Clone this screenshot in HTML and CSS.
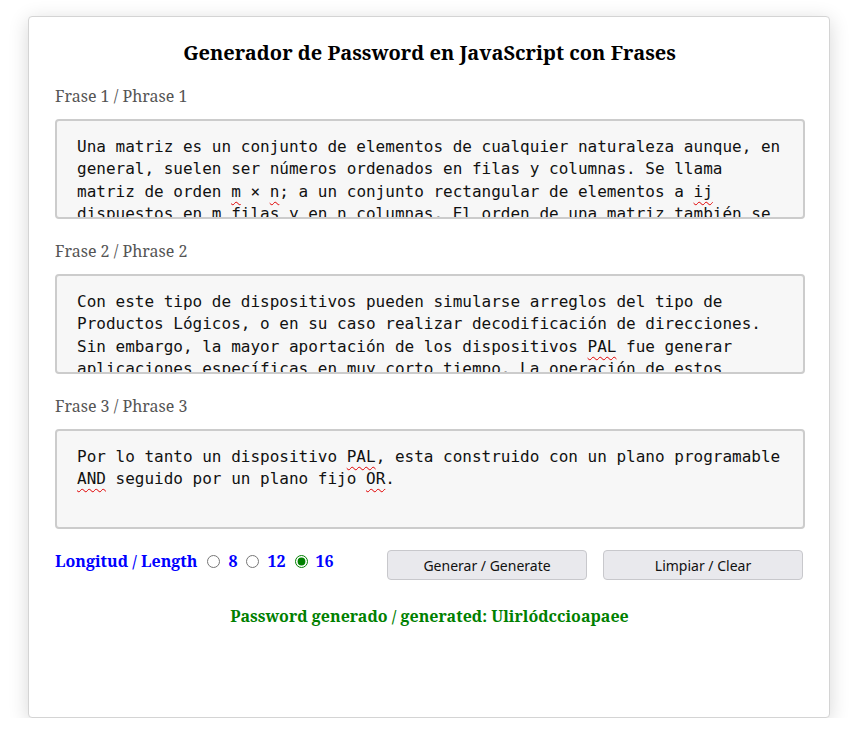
FILE: index.html
```html
<!DOCTYPE html>
<html lang="es">
<head>
<meta charset="utf-8">
<title>Generador de Password</title>
<link rel="stylesheet" href="styles.css">
</head>
<body>
<div class="card">
  <h1 class="title">Generador de Password en JavaScript con Frases</h1>

  <label class="label">Frase 1 / Phrase 1</label>
  <div class="area">Una matriz es un conjunto de elementos de cualquier naturaleza aunque, en general, suelen ser números ordenados en filas y columnas. Se llama matriz de orden <span class="sp">m</span> × <span class="sp">n</span>; a un conjunto rectangular de elementos a <span class="sp">ij</span> dispuestos en m filas y en n columnas. El orden de una matriz también se denomina dimensión o tamaño.</div>

  <label class="label">Frase 2 / Phrase 2</label>
  <div class="area">Con este tipo de dispositivos pueden simularse arreglos del tipo de Productos Lógicos, o en su caso realizar decodificación de direcciones. Sin embargo, la mayor aportación de los dispositivos <span class="sp">PAL</span> fue generar aplicaciones específicas en muy corto tiempo. La operación de estos dispositivos es sencilla.</div>

  <label class="label">Frase 3 / Phrase 3</label>
  <div class="area">Por lo tanto un dispositivo <span class="sp">PAL</span>, esta construido con un plano programable <span class="sp">AND</span> seguido por un plano fijo <span class="sp">OR</span>.</div>

  <div class="controls">
    <div class="length">
      <span class="len-label">Longitud / Length</span>
      <label class="opt"><input type="radio" name="len"> 8</label>
      <label class="opt"><input type="radio" name="len"> 12</label>
      <label class="opt"><input type="radio" name="len" checked> 16</label>
    </div>
    <div class="buttons">
      <button class="btn">Generar / Generate</button>
      <button class="btn">Limpiar / Clear</button>
    </div>
  </div>

  <p class="result">Password generado / generated: Ulirlódccioapaee</p>
</div>
</body>
</html>
```

FILE: styles.css
```css
html, body {
  margin: 0;
  padding: 0;
  background: #ffffff;
}

body {
  font-family: "Noto Serif", "DejaVu Serif", serif;
}

.card {
  box-sizing: border-box;
  width: 802px;
  height: 702px;
  margin: 16px 0 0 28px;
  padding: 0 25px 0 26px;
  border: 1px solid #d4d4d4;
  border-radius: 4px;
  background: #fff;
  box-shadow: 0 4px 20px rgba(0, 0, 0, 0.16);
  display: flex;
  flex-direction: column;
}

.title {
  margin: 22px 0 19px;
  font-size: 20px;
  line-height: 27px;
  font-weight: bold;
  color: #000;
  text-align: center;
}

.label {
  display: block;
  font-size: 16px;
  line-height: 22px;
  color: #555;
  margin: 0 0 12px;
}

.area {
  box-sizing: border-box;
  width: 750px;
  height: 100px;
  padding: 15px 20px 13px;
  margin: 0 0 21px;
  border: 2px solid #cccccc;
  border-radius: 4px;
  background: #f7f7f7;
  font-family: "DejaVu Sans Mono", monospace;
  font-size: 16px;
  line-height: 22.4px;
  color: #111;
  overflow: hidden;
}

.sp {
  text-decoration: underline wavy #e00000;
  text-decoration-thickness: 1px;
  text-underline-offset: 4px;
}

.controls {
  display: flex;
  justify-content: space-between;
  align-items: flex-start;
  margin-top: 0;
  padding-right: 1px;
}

.length {
  display: flex;
  align-items: center;
  gap: 9px;
  font-weight: bold;
  font-size: 16px;
  line-height: 22px;
  color: #0000ff;
}

.len-label {
  margin-right: 1px;
}

.opt {
  display: flex;
  align-items: center;
  gap: 8px;
  color: #0000ff;
}

.opt input {
  margin: 0;
  width: 13px;
  height: 13px;
  accent-color: #008000;
}

.buttons {
  display: flex;
  gap: 16px;
}

.btn {
  box-sizing: border-box;
  width: 200px;
  height: 30px;
  font-family: "Noto Sans", "Open Sans", sans-serif;
  font-size: 14px;
  color: #111;
  background: #e9e9ed;
  border: 1px solid #c8c8cc;
  border-radius: 4px;
  padding: 0;
}

.result {
  margin: 25px 0 0;
  text-align: center;
  font-size: 16px;
  line-height: 22px;
  font-weight: bold;
  color: #008000;
}
```
